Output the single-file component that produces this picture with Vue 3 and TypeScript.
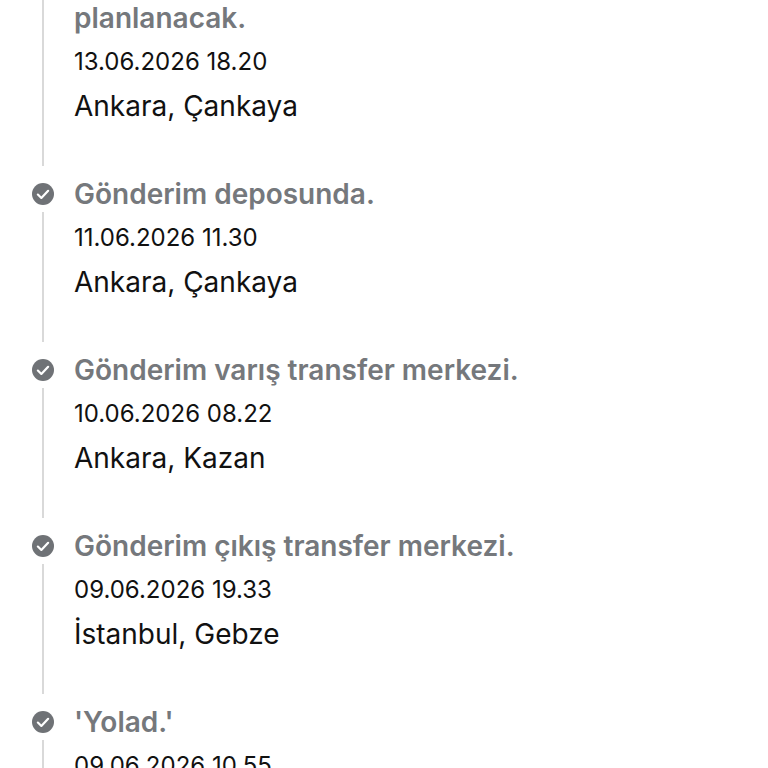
<script setup lang="ts">
type Step = { title: string; date: string; place: string; icon: boolean };

const steps: Step[] = [
  { title: "planlanacak.", date: "13.06.2026 18.20", place: "Ankara, Çankaya", icon: false },
  { title: "Gönderim deposunda.", date: "11.06.2026 11.30", place: "Ankara, Çankaya", icon: true },
  { title: "Gönderim varış transfer merkezi.", date: "10.06.2026 08.22", place: "Ankara, Kazan", icon: true },
  { title: "Gönderim çıkış transfer merkezi.", date: "09.06.2026 19.33", place: "İstanbul, Gebze", icon: true },
  { title: "'Yolad.'", date: "09.06.2026 10.55", place: "İstanbul, Gebze", icon: true },
];
</script>

<template>
  <div class="timeline">
    <div v-for="step in steps" :key="step.date" class="step">
      <div class="rail">
        <div v-if="step.icon" class="dot">
          <svg width="22" height="22" viewBox="0 0 24 24">
            <circle cx="12" cy="12" r="12" fill="#6f7276" />
            <path d="M6.4 12.6l3.8 3.7 7.4-7.8" fill="none" stroke="#fff" stroke-width="2.4" stroke-linecap="round" stroke-linejoin="round" />
          </svg>
        </div>
        <div class="line"></div>
      </div>
      <div class="info">
        <div class="title">{{ step.title }}</div>
        <div class="date">{{ step.date }}</div>
        <div class="place">{{ step.place }}</div>
      </div>
    </div>
  </div>
</template>

<style scoped>
.timeline {
  height: 768px;
  overflow: hidden;
  background: #fff;
  padding-left: 32px;
  font-family: Inter, "Liberation Sans", sans-serif;
}

.step {
  display: flex;
  height: 176px;
}

.rail {
  width: 22px;
  margin-right: 20px;
  padding-bottom: 10px;
  display: flex;
  flex-direction: column;
  align-items: center;
  box-sizing: border-box;
}

.dot {
  height: 36px;
  display: flex;
  align-items: center;
  flex-shrink: 0;
}

.line {
  flex: 1;
  width: 2px;
  background: #d9d9d9;
}

.title {
  font-size: 28px;
  line-height: 36px;
  font-weight: 600;
  color: #75787c;
}

.date {
  margin-top: 10px;
  font-size: 24px;
  line-height: 32px;
  color: #111;
}

.place {
  margin-top: 10px;
  font-size: 28px;
  line-height: 36px;
  color: #111;
}
</style>

<style>
html, body {
  margin: 0;
  background: #fff;
  overflow: hidden;
}
</style>
